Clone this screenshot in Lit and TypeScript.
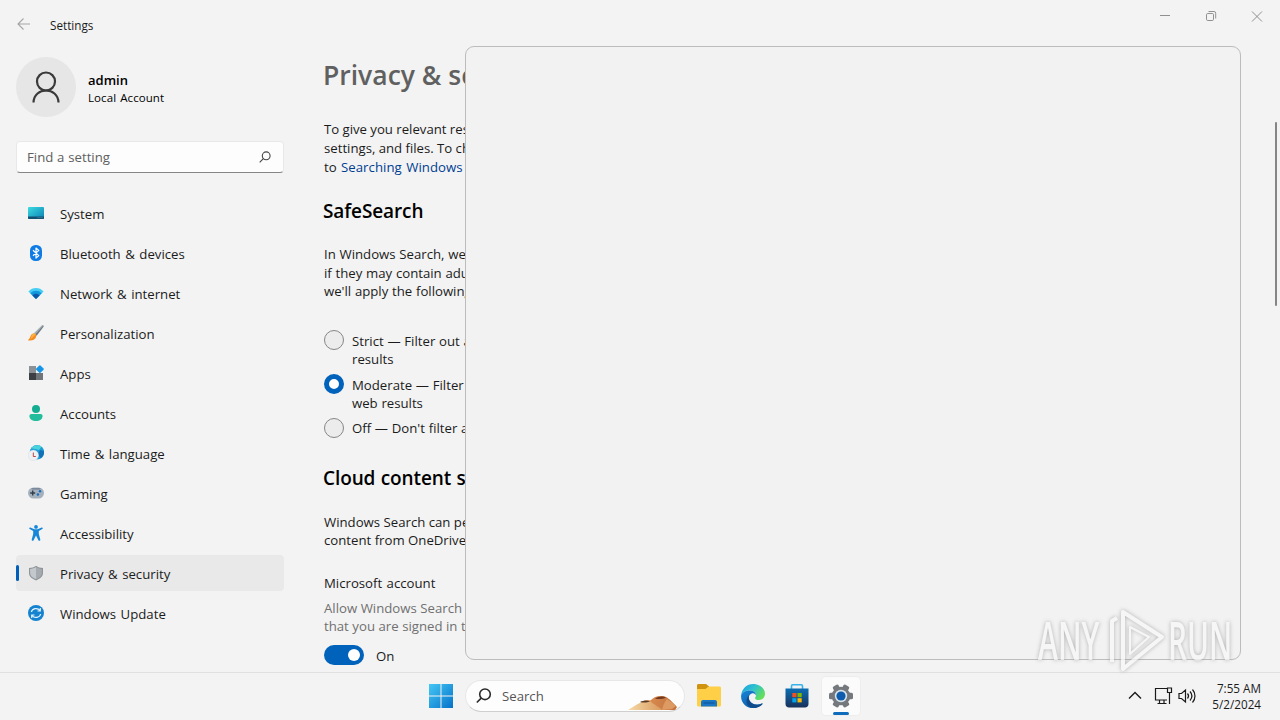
import { LitElement, html, css, svg } from 'lit';
import { customElement, property, state } from 'lit/decorators.js';

interface NavEntry {
  id: string;
  label: string;
}

const NAV: NavEntry[] = [
  { id: 'system', label: 'System' },
  { id: 'bluetooth', label: 'Bluetooth & devices' },
  { id: 'network', label: 'Network & internet' },
  { id: 'personalization', label: 'Personalization' },
  { id: 'apps', label: 'Apps' },
  { id: 'accounts', label: 'Accounts' },
  { id: 'time', label: 'Time & language' },
  { id: 'gaming', label: 'Gaming' },
  { id: 'accessibility', label: 'Accessibility' },
  { id: 'privacy', label: 'Privacy & security' },
  { id: 'update', label: 'Windows Update' },
];

// 16x16 glyphs
const NAV_ICONS: Record<string, unknown> = {
  system: svg`
    <defs><linearGradient id="g" x1="0" y1="0" x2="1" y2="1">
      <stop offset="0" stop-color="#3ddbe0"/><stop offset="1" stop-color="#0a7fb5"/>
    </linearGradient></defs>
    <rect x="0" y="2" width="16" height="12" rx="1" fill="url(#g)"/>
    <path d="M0 11.4h16V13a1 1 0 0 1-1 1H1a1 1 0 0 1-1-1z" fill="#124f70"/>
    <path d="M9.5 12.7h1M11.5 12.7h1M13.5 12.7h1" stroke="#5fa6c4" stroke-width=".8"/>`,
  bluetooth: svg`
    <rect x="2" y="0" width="12" height="16" rx="5.500" fill="#0f7ce6"/>
    <path d="M5 5.2 10.8 10.6 8 13V3l2.800 2.400L5 10.800" fill="none" stroke="#fff" stroke-width="1.2" stroke-linejoin="round"/>`,
  network: svg`
    <path d="M.4 6.400C4.600 1.900 11.400 1.900 15.600 6.400L8 14z" fill="#45cdf3"/>
    <path d="M2.300 8.300c3.200-3.300 8.200-3.300 11.400 0L8 14z" fill="#1397dd"/>
    <path d="M4.400 10.400c2-2.100 5.200-2.100 7.200 0L8 14z" fill="#0b57a8"/>`,
  personalization: svg`
    <path d="M14 .5c1.200-.6 2 .2 1.500 1.300L8.700 10.800 6 8.500z" fill="#6d7982"/>
    <path d="M14 .5c.5-.3 1-.2 1.300 0L7.200 9.500 6 8.500z" fill="#a9b3ba"/>
    <path d="M5.300 8.500c1.700-.3 3.300 1.200 2.900 2.900-.6 2.700-3.500 4.500-7.400 4.100-.7 0-.8-.6-.3-1 2-1.300 1.800-5.400 4.800-6z" fill="#f38b1e"/>
    <path d="M5.300 8.500c1.300-.2 2 .4 2.400 1-2.300 1.300-3 4-5.200 4.400.8-1.800 1-5 2.800-5.400z" fill="#ffb040"/>`,
  apps: svg`
    <rect x="1" y="1" width="7" height="7" fill="#8c9196"/>
    <rect x="1" y="8" width="7" height="7" fill="#3c4045"/>
    <rect x="8" y="8" width="7" height="7" fill="#70757a"/>
    <rect x="8.900" y="1.100" width="6" height="6" rx=".8" fill="#1595e8" transform="rotate(45 11.900 4.100)"/>`,
  accounts: svg`
    <circle cx="8" cy="4" r="4" fill="#14ad92"/>
    <path d="M3.500 9h9c1.300 0 2.100.8 2.100 2 0 3-2.900 5-6.600 5s-6.600-2-6.600-5c0-1.200.8-2 2.100-2z" fill="#22bd9c"/>`,
  time: svg`
    <circle cx="9" cy="7.300" r="7.200" fill="#1d9cd6"/>
    <path d="M3 3.300C6-.3 11-.6 13.500 1.700L11 5 7 4z" fill="#4bd3dc"/>
    <path d="M12 5l4 1c.4 3-1 5.500-3.500 7.300L10 9z" fill="#1571b5"/>
    <circle cx="5.300" cy="10.300" r="5.200" fill="#eef1f4" stroke="#d0d8de" stroke-width=".4"/>
    <path d="M5.300 7.500v4h2.500" fill="none" stroke="#b8464c" stroke-width="1"/>`,
  gaming: svg`
    <rect x="0" y="2.500" width="16" height="11" rx="5.500" fill="#a5b0bd"/>
    <path d="M3.300 3.200h9.400l-1 1.300H4.300z" fill="#6c7c90"/>
    <path d="M4.700 5.500v5M2.200 8h5" stroke="#333e4b" stroke-width="1.400"/>
    <circle cx="12" cy="6.300" r="1.200" fill="#176dbc"/><circle cx="9.900" cy="9.500" r="1.200" fill="#176dbc"/>`,
  accessibility: svg`
    <circle cx="8" cy="1.900" r="1.900" fill="#1686d9"/>
    <path d="M2.400 2.500 6.300 4.300h3.400l3.900-1.800c1.100-.3 1.600 1 .7 1.500L10.800 6v3l1.500 5.600c.2 1.300-1.400 1.700-1.900.6L8 10.500l-2.400 4.700c-.5 1.100-2.100.7-1.900-.6L5.200 9V6L1.700 4c-.9-.5-.4-1.800.7-1.500z" fill="#1686d9"/>`,
  privacy: svg`
    <path d="M8 .8c2 1.500 4.300 2.200 7 2.200v5c0 3.500-3 5.800-7 7.400C4 13.800 1 11.500 1 8V3c2.700 0 5-.7 7-2.200z" fill="#8e9499"/>
    <path d="M8 2.100c1.700 1.200 3.700 1.800 5.900 1.900v4c0 2.900-2.500 4.800-5.900 6.200z" fill="#a4aaaf"/>
    <path d="M8 2.100C6.300 3.300 4.300 3.900 2.100 4v4c0 2.900 2.500 4.800 5.900 6.200z" fill="#c3c8cc"/>`,
  update: svg`
    <circle cx="8" cy="8" r="8" fill="#1583cf"/>
    <path d="M3.400 7C4.100 3.300 9.600 2.300 12 5.500M12.300 3v3H9.500M12.600 9C11.900 12.700 6.400 13.700 4 10.500M3.700 13v-3h2.800" fill="none" stroke="#e5f4fc" stroke-width="1.200"/>`,
};

@customElement('nav-item')
export class NavItem extends LitElement {
  @property() icon = '';
  @property() label = '';
  @property({ type: Boolean, reflect: true }) selected = false;

  static styles = css`
    :host {
      display: flex;
      align-items: center;
      box-sizing: border-box;
      height: 36px;
      border-radius: 4px;
    }

    :host([selected]) {
      background: #e9e9e9;
    }

    .bar {
      width: 3px;
      height: 16px;
      border-radius: 2px;
      margin-right: 9px;
    }

    :host([selected]) .bar {
      background: #005fb8;
    }

    svg {
      width: 16px;
      height: 16px;
      margin-right: 16px;
      margin-top: -1px;
    }

    .label {
      padding-top: 2px;
      white-space: nowrap;
      word-spacing: 1.1px;
    }
  `;

  render() {
    return html`
      <span class="bar"></span>
      <svg viewBox="0 0 16 16">${NAV_ICONS[this.icon]}</svg>
      <span class="label">${this.label}</span>
    `;
  }
}

@customElement('settings-sidebar')
export class SettingsSidebar extends LitElement {
  @state() private current = 'privacy';

  static styles = css`
    :host {
      display: flex;
      flex-direction: column;
      box-sizing: border-box;
      width: 300px;
      padding: 9px 16px 0;
      flex: none;
    }

    .user {
      display: flex;
      align-items: center;
      gap: 12px;
    }

    .avatar {
      width: 60px;
      height: 60px;
      border-radius: 50%;
      background: #e6e6e6;
    }

    .name {
      font-weight: 600;
      font-size: 13px;
      line-height: 18px;
      padding-top: 3px;
      color: #000;
    }

    .kind {
      font-size: 11.5px;
      letter-spacing: 0.08px;
      word-spacing: 1px;
      line-height: 16px;
      padding-top: 1px;
      color: #000;
    }

    .search {
      display: flex;
      align-items: center;
      justify-content: space-between;
      box-sizing: border-box;
      height: 32px;
      margin: 24px 0 22px;
      padding: 0 12px 1px 10px;
      background: #fdfdfd;
      border: 1px solid #e8e8e8;
      border-bottom: 1px solid #868686;
      border-radius: 4px;
      color: #606060;
      word-spacing: 0.4px;
    }

    nav {
      display: flex;
      flex-direction: column;
      gap: 4px;
    }
  `;

  render() {
    return html`
      <div class="user">
        <svg class="avatar" viewBox="0 0 60 60">
          <g fill="none" stroke="#3a3a3a" stroke-width="2.200">
            <circle cx="30" cy="24.500" r="9"/>
            <path d="M17.500 45.500C18 29.500 42 29.500 42.500 45.500"/>
          </g>
        </svg>
        <div>
          <div class="name">admin</div>
          <div class="kind">Local Account</div>
        </div>
      </div>
      <div class="search">
        <span>Find a setting</span>
        <svg width="12" height="12" viewBox="0 0 12 12" fill="none" stroke="#444" stroke-width="1.100">
          <circle cx="7.200" cy="4.800" r="3.900"/><path d="M4.300 7.700.7 11.300"/>
        </svg>
      </div>
      <nav>
        ${NAV.map((n) => html`
          <nav-item
            .icon=${n.id}
            .label=${n.label}
            ?selected=${n.id === this.current}
            @click=${() => (this.current = n.id)}
          ></nav-item>
        `)}
      </nav>
    `;
  }
}

@customElement('settings-content')
export class SettingsContent extends LitElement {
  @state() private filter = 1;

  static styles = css`
    :host {
      display: block;
      flex: 1;
      padding: 9px 0 0 24px;
      overflow: hidden;
      white-space: nowrap;
      word-spacing: 0.3px;
    }

    h1, h2, p {
      margin: 0;
    }

    h1 {
      font-size: 26.5px;
      font-weight: 600;
      line-height: 36px;
      color: #606060;
      margin-left: -1px;
      word-spacing: 0;
    }

    h2 {
      font-size: 19px;
      font-weight: 600;
      line-height: 28px;
      letter-spacing: -0.1px;
      color: #000;
      margin-left: -1px;
      word-spacing: 0.5px;
    }

    .intro {
      margin: 27px 0 20px;
      line-height: 19px;
      word-spacing: -0.1px;
    }

    .link {
      color: #003e92;
      margin-left: 1px;
      letter-spacing: 0.05px;
      word-spacing: 1px;
    }

    .safe {
      margin: 20px 0 31.5px;
      line-height: 18.5px;
    }

    .choices {
      display: flex;
      flex-direction: column;
      gap: 8px;
      margin-bottom: 27px;
      line-height: 18px;
    }

    .choice {
      display: flex;
      gap: 8px;
    }

    .choice:last-child {
      margin-top: -1px;
    }

    .choice:last-child .dot {
      margin-top: -1px;
    }

    .dot {
      box-sizing: border-box;
      flex: none;
      width: 20px;
      height: 20px;
      margin: -2px 0;
      border: 1px solid #868686;
      border-radius: 50%;
      background: #ececec;
    }

    .dot.on {
      border: 5px solid #0062ba;
      background: #fff;
    }

    .cloud {
      margin: 21px 0 25px;
      line-height: 18px;
      word-spacing: 0;
    }

    .account {
      line-height: 18px;
      word-spacing: 1px;
    }

    .muted {
      margin: 7px 0 10px;
      line-height: 18px;
      color: #707070;
      word-spacing: 0.1px;
    }

    .switch-row {
      display: flex;
      align-items: center;
      gap: 12px;
      height: 20px;
    }

    .switch {
      display: flex;
      justify-content: flex-end;
      box-sizing: border-box;
      width: 40px;
      height: 20px;
      padding: 4px;
      border-radius: 10px;
      background: #0062ba;
    }

    .knob {
      width: 12px;
      height: 12px;
      border-radius: 50%;
      background: #fff;
    }

    .state {
      padding-top: 2px;
    }
  `;

  private renderChoice(index: number, text: unknown) {
    return html`
      <div class="choice" @click=${() => (this.filter = index)}>
        <span class="dot ${this.filter === index ? 'on' : ''}"></span>
        <span>${text}</span>
      </div>
    `;
  }

  render() {
    return html`
      <h1>Privacy &amp; security</h1>
      <p class="intro">
        To give you relevant results<br>settings, and files. To change<br>to
        <span class="link">Searching Windows</span>
      </p>
      <h2>SafeSearch</h2>
      <p class="safe">In Windows Search, we<br>if they may contain adult<br>we'll apply the following</p>
      <div class="choices">
        ${this.renderChoice(0, html`Strict — Filter out adult<br>results`)}
        ${this.renderChoice(1, html`Moderate — Filter<br>web results`)}
        ${this.renderChoice(2, html`Off — Don't filter adult`)}
      </div>
      <h2>Cloud content search</h2>
      <p class="cloud">Windows Search can personalize<br>content from OneDrive</p>
      <div class="account">Microsoft account</div>
      <p class="muted">Allow Windows Search<br>that you are signed in to</p>
      <div class="switch-row">
        <span class="switch"><span class="knob"></span></span>
        <span class="state">On</span>
      </div>
    `;
  }
}

@customElement('task-bar')
export class TaskBar extends LitElement {
  static styles = css`
    :host {
      display: grid;
      grid-template-columns: 1fr auto 1fr;
      align-items: center;
      box-sizing: border-box;
      height: 48px;
      padding: 0 2px 1px 0;
      border-top: 1px solid #e0e0e0;
      background: #f3f3f3;
    }

    .apps {
      display: flex;
      align-items: center;
      grid-column: 2;
    }

    .app {
      display: flex;
      align-items: center;
      justify-content: center;
      width: 44px;
      height: 40px;
    }

    .start {
      width: 47px;
      padding-right: 2px;
      box-sizing: border-box;
    }

    .search {
      display: flex;
      align-items: center;
      box-sizing: border-box;
      width: 220px;
      height: 32px;
      margin-right: 2px;
      padding-left: 10px;
      border: 1px solid #e7e7e7;
      border-bottom-color: #cfcfcf;
      border-radius: 16px;
      background: #fdfdfd;
      color: #555;
      overflow: hidden;
    }

    .search span {
      flex: 1;
      padding-left: 10px;
    }

    .dune {
      align-self: flex-end;
      margin-right: 4px;
    }

    .active {
      position: relative;
      width: 38px;
      height: 38px;
      margin: 0 0 0 3px;
      box-sizing: border-box;
      border-radius: 4px;
      background: #fbfbfb;
      box-shadow: 0 0 0 1px #ededed;
    }

    .active::after {
      content: '';
      position: absolute;
      left: 11px;
      bottom: 0;
      width: 16px;
      height: 3px;
      border-radius: 2px;
      background: #0f6cbd;
    }

    .tray {
      grid-column: 3;
      justify-self: end;
      display: flex;
      align-items: center;
      padding-right: 17px;
    }

    .clock {
      width: 65px;
      text-align: right;
      font-size: 11.7px;
      line-height: 16px;
      white-space: nowrap;
    }
  `;

  render() {
    return html`
      <div class="apps">
        <div class="app start">
          <svg width="24" height="24" viewBox="0 0 24 24">
            <defs><linearGradient id="w" gradientUnits="userSpaceOnUse" x1="0" y1="0" x2="24" y2="24">
              <stop offset="0" stop-color="#45c8f5"/><stop offset="1" stop-color="#0571c9"/>
            </linearGradient></defs>
            <path d="M0 0h11.500v11.500H0zM12.500 0H24v11.500H12.500zM0 12.500h11.500V24H0zM12.500 12.500H24V24H12.500z" fill="url(#w)"/>
          </svg>
        </div>
        <div class="search">
          <svg width="16" height="16" viewBox="0 0 16 16" fill="none" stroke="#2b2b2b" stroke-width="1.600">
            <circle cx="9" cy="6.300" r="5.300"/><path d="M5.200 10.100.8 14.500"/>
          </svg>
          <span>Search</span>
          <svg class="dune" width="52" height="18" viewBox="0 0 52 18">
            <defs>
              <linearGradient id="d1" x1="0" x2="1"><stop offset="0" stop-color="#f6dba8"/><stop offset=".5" stop-color="#e0aa70"/><stop offset="1" stop-color="#c98345"/></linearGradient>
              <linearGradient id="d2" x1="0" x2="1"><stop offset="0" stop-color="#d98a50"/><stop offset="1" stop-color="#c0703c"/></linearGradient>
            </defs>
            <path d="M0 17C6 13 11 10 16 8c3-1.500 7-1 10-.5C33 9 43 13 50 17z" fill="url(#d1)"/>
            <path d="M22 8c3-3.500 7-5.500 13-5 5 .5 9 6 14 11l-2 3H34c-2-3-8-5-12-9z" fill="url(#d2)"/>
            <path d="M34 17c1-4 2-8 5-11 3 2 7 5 9 7l-4 3z" fill="#dd9a62"/>
            <path d="M12 9c3-1.500 7-2 10-.8-2 1.300-7 1.800-10 .8z" fill="#5c3c28"/>
            <path d="M27 5.500c3-2.300 8-2.700 11-1-3 1.700-8 2-11 1z" fill="#71391f"/>
          </svg>
        </div>
        <div class="app">
          <svg width="24" height="24" viewBox="0 0 24 24">
            <path d="M1.500 0h7c1.500 0 2 2 3.500 2v4H0V1.500C0 .6.6 0 1.500 0z" fill="#d0930f"/>
            <path d="M0 5h8.500L11.500 2.500h11c.9 0 1.500.6 1.500 1.500v17c0 .9-.6 1.500-1.500 1.500h-21C.6 22.500 0 21.900 0 21z" fill="#ffcf48"/>
            <path d="M4 22.500V18c0-1.200 1-2 2-2h12c1 0 2 .8 2 2v4.500z" fill="#1876c5"/>
            <path d="M6.500 19h11" stroke="#0f569b" stroke-width="1.200"/>
          </svg>
        </div>
        <div class="app">
          <svg width="24" height="24" viewBox="0 0 24 24">
            <defs>
              <linearGradient id="e1" x1="0" y1="0" x2="1" y2=".6"><stop offset="0" stop-color="#1b9de2"/><stop offset=".5" stop-color="#2fc2cf"/><stop offset="1" stop-color="#65df58"/></linearGradient>
              <linearGradient id="e2" x1="0" y1="0" x2=".8" y2="1"><stop offset="0" stop-color="#1785d8"/><stop offset="1" stop-color="#0c59a4"/></linearGradient>
            </defs>
            <path d="M.2 11C1 4.500 6 0 12 0c7 0 12 4.500 12 9.800 0 3.700-2.800 6.200-6 6.200-2.500 0-3.900-.9-3.900-1.800 0-.8.9-1.100.9-2.900C15 8.500 12 6.500 8.800 6.500 4.500 6.500 1.500 8.500.2 11z" fill="url(#e1)"/>
            <path d="M.1 11.500C.8 8.800 4 6.500 8.800 6.500c3.400 0 6.200 2 6.200 4.800 0 0-1.200-2.200-3.500-2C8 9.500 7 13.500 8.500 16.500c2 4 7.500 5.500 13 2.500C19.500 22 16 24 12 24 5 24-.4 18.500.1 11.500z" fill="url(#e2)"/>
            <path d="M11 9.300c-3 .5-4.200 4-2.500 7.200 2 4 7.500 5.500 12.600 3 .5-.3.900.2.600.6-3.700 4.300-9.200 4.700-12.700 3C3.500 20.500 4.500 12 11 9.300z" fill="#124b8c"/>
          </svg>
        </div>
        <div class="app">
          <svg width="24" height="24" viewBox="0 0 24 24">
            <defs><linearGradient id="s" x1="0" y1="0" x2="0" y2="1"><stop offset="0" stop-color="#0d6db4"/><stop offset="1" stop-color="#173159"/></linearGradient></defs>
            <path d="M6.500 5V2c0-.7.500-1.200 1.200-1.200h8.600c.7 0 1.200.5 1.200 1.200v3" fill="none" stroke="#37b2eb" stroke-width="1.600"/>
            <path d="M.5 4.500h23V20c0 2-1.500 3.500-3.500 3.500H4C2 23.500.5 22 .5 20z" fill="url(#s)"/>
            <path d="M7.300 9h4.200v4.200H7.300z" fill="#f25022"/><path d="M12.500 9h4.200v4.200h-4.200z" fill="#7fba00"/>
            <path d="M7.300 14.200h4.200v4.200H7.300z" fill="#00a4ef"/><path d="M12.500 14.200h4.200v4.200h-4.200z" fill="#ffb900"/>
          </svg>
        </div>
        <div class="app active">
          <svg width="26" height="26" viewBox="0 0 26 26">
            <g fill="#75797d">
              <circle cx="13" cy="13" r="9.300"/>
              ${[30, 90, 150].map((a) => svg`<rect x="9.800" y="1" width="6.400" height="24" rx="1.500" transform="rotate(${a} 13 13)"/>`)}
            </g>
            <circle cx="13" cy="13" r="6.200" fill="#d9e3ec"/>
            <circle cx="13" cy="13" r="4.600" fill="#0e5cad"/>
          </svg>
        </div>
      </div>
      <div class="tray">
        <svg width="72" height="24" viewBox="0 0 72 24" fill="none" stroke="#1a1a1a" stroke-width="1.200">
          <path d="M5 14.500 11 8.500 17 14.500" stroke-width="1.400"/>
          <path d="M43 4.500H31.500v11.500H43M35.500 16.500v3M40 16.500v3M33.500 19.500h9M43.500 4h4v4.500h-4zM45.500 8.500v11.500"/>
          <path d="M55 9.500h2.500l4-3.500v12l-4-3.500H55zM63.500 9.500c1.300 1.500 1.300 3.500 0 5M66 7.500c2.400 2.800 2.400 6.200 0 9M68.500 5.500c3.300 3.800 3.300 9.200 0 13"/>
        </svg>
        <div class="clock">7:55 AM<br>5/2/2024</div>
      </div>
    `;
  }
}

@customElement('app-root')
export class AppRoot extends LitElement {
  static styles = css`
    :host {
      display: flex;
      flex-direction: column;
      position: relative;
      width: 1280px;
      height: 720px;
      overflow: hidden;
      background: #f3f3f3;
      color: #1b1b1b;
      font-family: 'Open Sans', 'Noto Sans', sans-serif;
      font-size: 13.2px;
    }

    .titlebar {
      display: flex;
      height: 48px;
      align-items: center;
      padding-left: 17px;
      font-size: 11.7px;
      flex: none;
    }

    .title {
      flex: 1;
      padding: 1px 0 0 19px;
    }

    .controls {
      align-self: flex-start;
    }

    .body {
      display: flex;
      flex: 1;
      min-height: 0;
    }

    .scroll {
      width: 2px;
      height: 184px;
      margin: 74px 3px 0 0;
      border-radius: 1px;
      background: #858585;
    }

    .popup {
      position: absolute;
      box-sizing: border-box;
      left: 465px;
      top: 46px;
      width: 776px;
      height: 614px;
      border: 1px solid #bcbcbc;
      border-radius: 9px;
      background: #f2f2f2;
    }

    .watermark {
      position: absolute;
      left: 1030px;
      top: 600px;
      font-family: 'Open Sans', sans-serif;
      font-weight: 600;
      font-size: 52px;
      filter: drop-shadow(0 0 2px #999);
      opacity: 0.75;
    }
  `;

  render() {
    return html`
      <div class="titlebar">
        <svg width="14" height="14" viewBox="0 0 14 14" fill="none" stroke="#a5a5a5" stroke-width="1.100">
          <path d="M13 7H1M6.500 1.500 1 7l5.500 5.500"/>
        </svg>
        <span class="title">Settings</span>
        <svg class="controls" width="138" height="32" viewBox="0 0 138 32" fill="none" stroke="#909090" stroke-width="1">
          <path d="M18 15.500h10"/>
          <rect x="64.500" y="13.500" width="7" height="7" rx="1.200"/>
          <path d="M66.500 11.500h5.500a1.700 1.700 0 0 1 1.700 1.700v5.300"/>
          <path d="M110 11.500l10 10M120 11.500l-10 10"/>
        </svg>
      </div>
      <div class="body">
        <settings-sidebar></settings-sidebar>
        <settings-content></settings-content>
        <div class="scroll"></div>
      </div>
      <task-bar></task-bar>
      <div class="popup"></div>
      <svg class="watermark" width="210" height="80" viewBox="0 0 210 80" fill="#f8f8f8">
        <text transform="translate(8 60) scale(.58 1)">ANY</text>
        <text transform="translate(138 60) scale(.57 1)">RUN</text>
        <g fill="none" stroke="#f8f8f8" stroke-width="4" stroke-linejoin="round">
          <path d="M93 12 132 37 93 69z"/>
          <path d="M100 27v27l19-17z" stroke-width="2"/>
          <path d="M82 62V21l5-3"/>
        </g>
      </svg>
    `;
  }
}
